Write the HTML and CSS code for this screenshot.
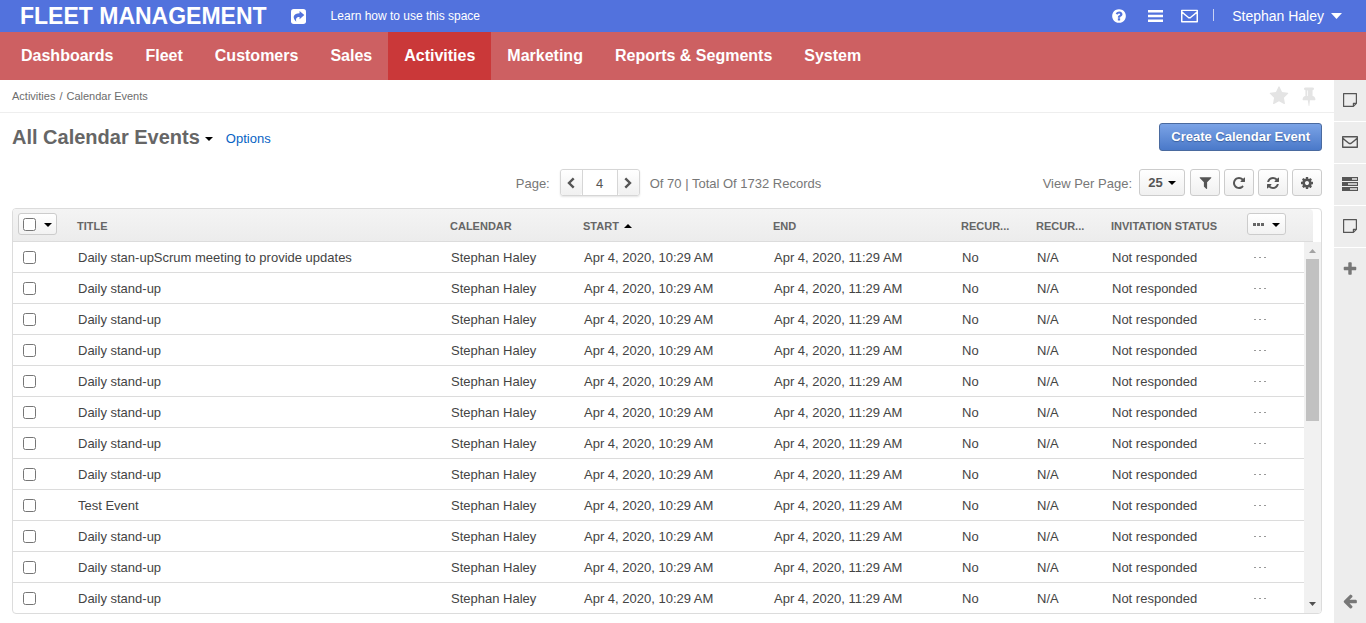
FILE: index.html
```html
<!DOCTYPE html>
<html lang="en">
<head>
<meta charset="utf-8">
<title>All Calendar Events</title>
<link rel="stylesheet" href="styles.css">
</head>
<body>
<svg class="sprite" aria-hidden="true">
  <symbol id="i-envelope" viewBox="0 0 16 12"><path fill="none" stroke="currentColor" stroke-width="1.4" stroke-linejoin="round" d="M.7 .7H15.3V11.3H.7ZM.9 2.2C3 4.2 5 5.8 6.8 7.2Q8 8 9.2 7.2C11 5.8 13 4.2 15.1 2.2"/></symbol>
  <symbol id="i-note" viewBox="0 0 14 14"><path fill="none" stroke="currentColor" stroke-width="1.2" stroke-linejoin="round" d="M.6 .6H13.4V10.4L10.4 13.4H.6ZM13.4 10.4H10.4V13.4"/></symbol>
</svg>
<header class="topbar">
  <a class="logo" href="#">FLEET MANAGEMENT</a>
  <button class="plain share" aria-label="Share"><svg width="15" height="15" viewBox="0 0 14 14"><rect width="14" height="14" rx="2.6" fill="#fff"/><path fill="#5272dd" d="M8 1.8 12.4 5.7 8 9.6V7.4C5.2 7.3 4.2 8.6 5 12 3.2 10.4 2.2 8.6 2.6 6.8 3.2 4.6 5.3 3.9 8 3.9Z"/></svg></button>
  <a class="learn" href="#">Learn how to use this space</a>
  <div class="tools">
    <button class="plain" aria-label="Help"><svg width="16" height="16" viewBox="0 0 1792 1792"><path fill="currentColor" d="M1024 1376v-192q0-14-9-23t-23-9h-192q-14 0-23 9t-9 23v192q0 14 9 23t23 9h192q14 0 23-9t9-23zm256-672q0-88-55.5-163t-138.5-116-170-41q-243 0-371 213-15 24 8 42l132 100q7 6 19 6 16 0 25-12 53-68 86-92 34-24 86-24 48 0 85.5 26t37.5 59q0 38-20 61t-68 45q-63 28-115.5 86.5t-52.5 125.5v36q0 14 9 23t23 9h192q14 0 23-9t9-23q0-19 21.5-49.5t54.5-49.5q32-18 49-28.5t46-35 44.5-48 28-60.5 12.5-81zm384 192q0 209-103 385.5t-279.5 279.5-385.5 103-385.5-103-279.5-279.5-103-385.5 103-385.5 279.5-279.5 385.5-103 385.5 103 279.5 279.5 103 385.5z"/></svg></button>
    <button class="plain menu" aria-label="Menu"><svg width="15" height="12" viewBox="0 0 15 12"><path fill="currentColor" d="M0 0H15V2.4H0ZM0 4.8H15V7.2H0ZM0 9.6H15V12H0Z"/></svg></button>
    <button class="plain" aria-label="Mail"><svg width="17" height="14"><use href="#i-envelope"/></svg></button>
    <span class="divider"></span>
    <button class="plain user">Stephan Haley<svg width="11" height="6" viewBox="0 0 11 6"><path fill="currentColor" d="M0 0H11L5.5 6Z"/></svg></button>
  </div>
</header>
<nav class="nav">
  <a href="#">Dashboards</a><a href="#">Fleet</a><a href="#">Customers</a><a href="#">Sales</a><a class="active" href="#">Activities</a><a href="#">Marketing</a><a href="#">Reports &amp; Segments</a><a href="#">System</a>
</nav>
<div class="page">
  <main class="main">
    <div class="crumbs">
      <div class="trail"><span>Activities</span><span>/</span><span>Calendar Events</span></div>
      <div class="marks">
        <button class="plain" aria-label="Favorite"><svg width="20" height="20" viewBox="0 0 1792 1792"><path fill="currentColor" d="M1728 647q0 22-26 48l-363 354 86 500q1 7 1 20 0 21-10.5 35.5t-30.5 14.5q-19 0-40-12l-449-236-449 236q-22 12-40 12-21 0-31.5-14.5t-10.5-35.5q0-6 2-20l86-500-364-354q-25-27-25-48 0-37 56-46l502-73 225-455q19-41 49-41t49 41l225 455 502 73q56 9 56 46z"/></svg></button>
        <button class="plain" aria-label="Pin"><svg width="20" height="20" viewBox="0 0 1792 1792"><path fill="currentColor" d="M800 864v-448q0-14-9-23t-23-9-23 9-9 23v448q0 14 9 23t23 9 23-9 9-23zm672 352q0 26-19 45t-45 19h-429l-51 483q-2 12-10.5 20.5t-20.5 8.5h-1q-27 0-32-27l-76-485h-404q-26 0-45-19t-19-45q0-123 78.5-221.5t177.5-98.5v-512q-52 0-90-38t-38-90 38-90 90-38h640q52 0 90 38t38 90-38 90-90 38v512q99 0 177.5 98.5t78.5 221.5z"/></svg></button>
      </div>
    </div>
    <div class="heading">
      <h1>All Calendar Events</h1>
      <button class="plain view" aria-label="Choose view"><span class="caret"></span></button>
      <a class="options" href="#">Options</a>
      <button class="create">Create Calendar Event</button>
    </div>
    <div class="toolbar">
      <div class="pager">
        <label for="page">Page:</label>
        <div class="pages">
          <button aria-label="Previous page"><svg width="8" height="12" viewBox="0 0 8 12"><path d="M6.7 1.3 2 6 6.7 10.7" fill="none" stroke="currentColor" stroke-width="2.4"/></svg></button>
          <input id="page" type="text" value="4">
          <button aria-label="Next page"><svg width="8" height="12" viewBox="0 0 8 12"><path d="M1.3 1.3 6 6 1.3 10.7" fill="none" stroke="currentColor" stroke-width="2.4"/></svg></button>
        </div>
        <span>Of 70 | Total Of 1732 Records</span>
      </div>
      <div class="actions">
        <span>View Per Page:</span>
        <button class="btn per">25<span class="caret"></span></button>
        <button class="btn" aria-label="Filter"><svg width="15" height="15" viewBox="0 0 1792 1792"><path fill="currentColor" d="M1595 295q17 41-14 70l-493 493v742q0 42-39 59-13 5-25 5-27 0-45-19l-256-256q-19-19-19-45v-486l-493-493q-31-29-14-70 17-39 59-39h1280q42 0 59 39z"/></svg></button>
        <button class="btn" aria-label="Refresh"><svg width="14" height="14" viewBox="0 0 1792 1792"><path fill="currentColor" d="M1664 256v448q0 26-19 45t-45 19h-448q-42 0-59-40-17-39 14-69l138-138q-148-137-349-137-104 0-198.5 40.5t-163.5 109.5-109.5 163.5-40.5 198.5 40.5 198.5 109.5 163.5 163.5 109.5 198.5 40.5q119 0 225-52t179-147q7-10 23-12 15 0 25 9l137 138q9 8 9.5 20.5t-7.5 22.5q-109 132-264 204.5t-327 72.5q-156 0-298-61t-245-164-164-245-61-298 61-298 164-245 245-164 298-61q147 0 284.5 55.5t244.5 156.5l130-129q29-31 70-14 39 17 39 59z"/></svg></button>
        <button class="btn" aria-label="Reset"><svg width="14" height="14" viewBox="0 0 1792 1792"><path fill="currentColor" d="M1639 1056q0 5-1 7-64 268-268 434.5t-478 166.5q-146 0-282.5-55t-243.5-157l-129 129q-19 19-45 19t-45-19-19-45v-448q0-26 19-45t45-19h448q26 0 45 19t19 45-19 45l-137 137q71 66 161 102t187 36q134 0 250-65t186-179q11-17 53-117 8-23 30-23h192q13 0 22.5 9.5t9.5 22.5zm25-800v448q0 26-19 45t-45 19h-448q-26 0-45-19t-19-45 19-45l138-138q-148-137-349-137-134 0-250 65t-186 179q-11 17-53 117-8 23-30 23h-199q-13 0-22.5-9.5t-9.5-22.5v-7q65-268 270-434.5t480-166.5q146 0 284 55.5t245 156.5l130-129q19-19 45-19t45 19 19 45z"/></svg></button>
        <button class="btn" aria-label="Grid settings"><svg width="14" height="14" viewBox="0 0 1792 1792"><path fill="currentColor" d="M1152 896q0-106-75-181t-181-75-181 75-75 181 75 181 181 75 181-75 75-181zm512-109v222q0 12-8 23t-20 13l-185 28q-19 54-39 91 35 50 107 138 10 12 10 25t-9 23q-27 37-99 108t-94 71q-12 0-26-9l-138-108q-44 23-91 38-16 136-29 186-7 28-36 28h-222q-14 0-24.5-8.5t-11.5-21.5l-28-184q-49-16-90-37l-141 107q-10 9-25 9-14 0-25-11-126-114-165-168-7-10-7-23 0-12 8-23 15-21 51-66.5t54-70.5q-27-50-41-99l-183-27q-13-2-21-12.5t-8-23.5v-222q0-12 8-23t19-13l186-28q14-46 39-92-40-57-107-138-10-12-10-24 0-10 9-23 26-36 98.5-107.5t94.5-71.5q13 0 26 10l138 107q44-23 91-38 16-136 29-186 7-28 36-28h222q14 0 24.5 8.5t11.5 21.5l28 184q49 16 90 37l142-107q9-9 24-9 13 0 25 10 129 119 165 170 7 8 7 22 0 12-8 23-15 21-51 66.5t-54 70.5q26 50 41 98l183 28q13 2 21 12.5t8 23.5z"/></svg></button>
      </div>
    </div>
    <div class="grid">
      <table>
        <colgroup><col class="c-check"><col><col class="c-cal"><col class="c-start"><col class="c-end"><col class="c-rec"><col class="c-rec"><col class="c-inv"><col class="c-more"></colgroup>
        <thead><tr>
          <th class="check"><span class="mini"><input type="checkbox" aria-label="Select all"><span class="caret"></span></span></th>
          <th>TITLE</th><th>CALENDAR</th><th>START<span class="caret up"></span></th><th>END</th><th>RECUR...</th><th>RECUR...</th><th>INVITATION STATUS</th>
          <th><button class="mini" aria-label="Mass actions"><svg width="11" height="3" viewBox="0 0 11 3"><path fill="#666" d="M0 0H3V3H0ZM4 0H7V3H4ZM8 0H11V3H8Z"/></svg><span class="caret"></span></button></th>
        </tr></thead>
        <tbody id="rows"></tbody>
      </table>
      <div class="scroll">
        <div class="cap"></div>
        <div class="track">
          <svg width="7" height="4" viewBox="0 0 7 4"><path fill="#a3a3a3" d="M0 4H7L3.5 0Z"/></svg>
          <div class="thumb"></div>
          <svg class="down" width="7" height="4" viewBox="0 0 7 4"><path fill="#505050" d="M0 0H7L3.5 4Z"/></svg>
        </div>
      </div>
    </div>
  </main>
  <aside class="side">
    <button aria-label="Notes"><svg width="14" height="14"><use href="#i-note"/></svg></button>
    <button aria-label="Emails"><svg width="16" height="12"><use href="#i-envelope"/></svg></button>
    <button aria-label="Tasks"><svg width="16" height="14" viewBox="0 0 16 14"><path fill="currentColor" fill-rule="evenodd" d="M0 0H16V4H0ZM10 1.2V2.8H15V1.2ZM0 5H16V9H0ZM6 6.2V7.8H15V6.2ZM0 10H16V14H0ZM8 11.2V12.8H15V11.2Z"/></svg></button>
    <button aria-label="Sticky note"><svg width="14" height="14"><use href="#i-note"/></svg></button>
    <button class="soft" aria-label="Add"><svg width="16" height="16" viewBox="0 0 1792 1792"><path fill="currentColor" d="M1600 736v192q0 40-28 68t-68 28h-416v416q0 40-28 68t-68 28h-192q-40 0-68-28t-28-68v-416h-416q-40 0-68-28t-28-68v-192q0-40 28-68t68-28h416v-416q0-40 28-68t68-28h192q40 0 68 28t28 68v416h416q40 0 68 28t28 68z"/></svg></button>
    <button class="soft back" aria-label="Expand"><svg width="16" height="16" viewBox="0 0 1792 1792"><path fill="currentColor" d="M1664 896v128q0 53-32.5 90.5t-84.5 37.5h-704l293 294q38 36 38 90t-38 90l-75 76q-37 37-90 37-52 0-91-37l-651-652q-37-37-37-90 0-52 37-91l651-650q38-38 91-38 52 0 90 38l75 74q38 38 38 91t-38 91l-293 293h704q52 0 84.5 37.5t32.5 90.5z"/></svg></button>
  </aside>
</div>
<script src="rows.js"></script>
</body>
</html>
```
FILE: styles.css
```css
* { box-sizing: border-box; }
body {
  margin: 0;
  min-height: 100vh;
  display: flex;
  flex-direction: column;
  background: #fff;
  color: #444;
  font: 13px/18px "Liberation Sans", Arial, sans-serif;
}
a { text-decoration: none; color: inherit; }
button, input { font: inherit; color: inherit; }
svg { display: block; }
.sprite { display: none; }
button { display: flex; align-items: center; justify-content: center; cursor: pointer; }
.plain { padding: 0; border: 0; background: none; }

.topbar { display: flex; align-items: center; height: 32px; padding: 0 24px 0 20px; background: #5272dd; color: #fff; }
.logo { font-size: 23px; line-height: 32px; font-weight: bold; }
.share { margin: 0 25px 0 24px; }
.learn { font-size: 12px; }
.tools { display: flex; align-items: center; gap: 18px; margin-left: auto; }
.menu { margin: 0 0 0 3px; }
.divider { width: 1px; height: 12px; margin: 0 0 2px -3px; background: #c9d2f3; }
.user { gap: 7px; font-size: 14px; }

.nav { display: flex; height: 48px; padding-left: 5px; background: #cd6062; }
.nav a { padding: 0 16px; color: #fff; font-size: 16px; line-height: 48px; font-weight: bold; }
.nav .active { background: #ca3839; }

.page { display: flex; flex: 1; }
.main { flex: 1; min-width: 0; }
.crumbs { display: flex; align-items: center; justify-content: space-between; height: 33px; padding: 0 15px 0 12px; border-bottom: 1px solid #eee; color: #6d6d6d; font-size: 11px; }
.trail { display: flex; gap: 4px; }
.marks { display: flex; gap: 10px; color: #e4e4e4; }
.heading { display: flex; align-items: center; height: 48px; padding: 0 12px; }
h1 { margin: 0 5px 0 0; color: #666; font-size: 20px; line-height: 24px; }
.caret { display: inline-block; border: 4px solid transparent; border-top-color: #000; border-bottom: 0; }
.caret.up { margin: 0 0 2px 5px; border-top: 0; border-bottom: 4px solid #000; }
.view { padding-top: 4px; }
.options { margin: 3px 0 0 13px; color: #0763c4; }
.create {
  height: 28px;
  margin-left: auto;
  padding: 0 11px;
  border: 1px solid #4a6a9f;
  border-radius: 3px;
  background: linear-gradient(#7ba3e6, #4a79c9);
  color: #fff;
  font-weight: bold;
  text-shadow: 0 1px 1px #3a5f9f;
}

.toolbar { display: grid; grid-template-columns: 1fr auto 1fr; align-items: center; padding: 8px 12px 12px; color: #777; }
.pager { grid-column: 2; display: flex; align-items: center; gap: 10px; padding-left: 3px; }
.pager label, .pager > span, .actions > span { padding-top: 2px; }
.pages { display: flex; height: 27px; border: 1px solid #d6d6d6; border-radius: 3px; box-shadow: 0 1px 2px #e4e4e4; }
.pages button { width: 21px; padding: 0; border: 0; border-radius: 3px; background: linear-gradient(#fff, #f0f0f0); color: #555; }
.pages input { width: 36px; padding: 2px 0 0; border: solid #d6d6d6; border-width: 0 1px; color: #555; text-align: center; }
.actions { display: flex; align-items: center; justify-content: flex-end; gap: 4px; }
.btn { width: 30px; height: 27px; padding: 0; border: 1px solid #ccc; border-radius: 3px; background: linear-gradient(#fff, #f0f0f0); color: #555; }
.actions .per { width: 46px; gap: 5px; margin: 0 1px 0 3px; font-weight: bold; }

.grid { display: flex; margin: 0 12px 9px; border: 1px solid #dcdcdc; border-radius: 4px; overflow: hidden; }
table { flex: 1; width: 100%; min-width: 0; table-layout: fixed; border-spacing: 0; }
.c-check { width: 53px; }
.c-cal { width: 133px; }
.c-start { width: 190px; }
.c-end { width: 188px; }
.c-rec { width: 75px; }
.c-inv { width: 136px; }
.c-more { width: 68px; }
th, td { overflow: hidden; text-align: left; white-space: nowrap; text-overflow: ellipsis; }
th { height: 33px; padding: 2px 11px 0; border-bottom: 1px solid #dcdcdc; background: linear-gradient(#f4f4f4, #ececec); color: #666; font-size: 11px; }
th:last-child, th.check { padding-top: 0; padding-bottom: 2px; }
th.check { padding-left: 5px; padding-right: 0; }
td { height: 31px; padding: 2px 12px 0; border-bottom: 1px solid #dcdcdc; }
tr:last-child td { height: 30px; border-bottom: 0; }
td.check { padding: 0 0 0 10px; }
input[type="checkbox"] { display: block; width: 13px; height: 13px; margin: 0; }
.mini { display: flex; align-items: center; gap: 8px; width: 39px; height: 22px; padding: 0 4px; border: 1px solid #ccc; border-radius: 3px; background: linear-gradient(#fff, #f2f2f2); }
.mini .caret { margin-top: 2px; }
td:last-child { padding: 0 0 0 18px; }

.scroll { display: flex; flex-direction: column; width: 17px; }
.cap { width: 9px; height: 33px; border-bottom: 1px solid #dcdcdc; border-radius: 0 4px 0 0; background: linear-gradient(#f4f4f4, #ececec); }
.track { display: flex; flex: 1; flex-direction: column; align-items: center; padding: 7px 0; background: #f1f1f1; }
.thumb { width: 13px; height: 162px; margin-top: 6px; background: #c1c1c1; }
.down { margin-top: auto; }

.side { display: flex; flex-direction: column; width: 32px; background: #ededed; }
.side button { height: 42px; padding: 0 0 1px; border: 0; border-bottom: 1px solid #fff; background: none; color: #555; }
.side .soft { border: 0; padding: 0; color: #777; }
.side .back { margin-top: auto; padding: 0 0 3px; }
```
FILE: rows.js
```js
const titles = [
  "Daily stan-upScrum meeting to provide updates",
  ...Array(7).fill("Daily stand-up"),
  "Test Event",
  ...Array(3).fill("Daily stand-up")
];
const dots = '<button class="plain" aria-label="Row actions"><svg width="12" height="1" viewBox="0 0 12 1"><path fill="#999" d="M0 0H2V1H0ZM5 0H7V1H5ZM10 0H12V1H10Z"/></svg></button>';
document.getElementById("rows").innerHTML = titles.map(title => `<tr>
  <td class="check"><input type="checkbox" aria-label="Select ${title}"></td>
  <td>${title}</td><td>Stephan Haley</td>
  <td>Apr 4, 2020, 10:29 AM</td><td>Apr 4, 2020, 11:29 AM</td>
  <td>No</td><td>N/A</td><td>Not responded</td><td>${dots}</td>
</tr>`).join("");
```
